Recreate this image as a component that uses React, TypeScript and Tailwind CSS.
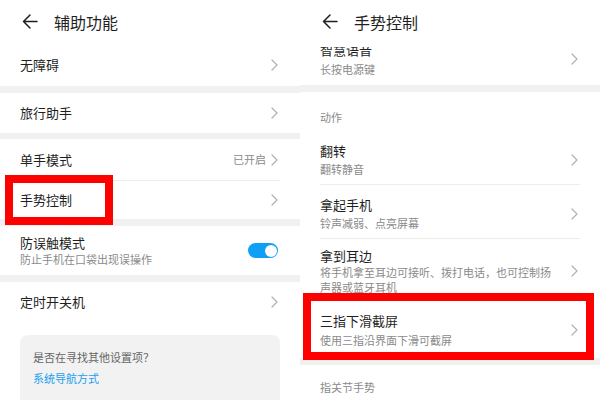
import React from "react";

const Chevron = () => (
  <svg width="7" height="12" viewBox="0 0 7 12" fill="none" className="shrink-0">
    <path d="M1 1L6 6L1 11" stroke="#b0b0b0" strokeWidth="1.2" strokeLinecap="round" strokeLinejoin="round" />
  </svg>
);

const Back = () => (
  <svg width="16" height="15" viewBox="0 0 16 15" fill="none" className="shrink-0">
    <path d="M15 7.5H1.5M8 1L1.5 7.5L8 14" stroke="#1f1f1f" strokeWidth="1.5" strokeLinecap="round" strokeLinejoin="round" />
  </svg>
);

const Sep = ({ h }: { h: string }) => <div className={`${h} bg-[#f1f1f1]`} />;

const Divider = () => <div className="mx-[20px] h-px bg-[#ececec]" />;

export default function App() {
  return (
    <div className="flex w-[600px] h-[400px] overflow-hidden bg-white font-['Noto_Sans_CJK_SC',sans-serif] text-[#1f1f1f]">
      {/* Left panel */}
      <div className="relative w-[300px] h-[400px] overflow-hidden bg-white">
        <div className="h-[43px] flex items-center pl-[22px]">
          <Back />
          <span className="ml-[16px] text-[16px] leading-[20px]">辅助功能</span>
        </div>
        <div className="h-[43px] flex items-center justify-between pl-[20px] pr-[22px]">
          <span className="text-[13px]">无障碍</span>
          <Chevron />
        </div>
        <Sep h="h-[7px]" />
        <div className="h-[40px] flex items-center justify-between pl-[20px] pr-[22px]">
          <span className="text-[13px]">旅行助手</span>
          <Chevron />
        </div>
        <Sep h="h-[6px]" />
        <div className="h-[41px] flex items-center justify-between pl-[20px] pr-[22px]">
          <span className="text-[13px]">单手模式</span>
          <div className="flex items-center gap-[5px]">
            <span className="text-[11px] text-[#8a8a8a]">已开启</span>
            <Chevron />
          </div>
        </div>
        <Divider />
        <div className="h-[38px] flex items-center justify-between pl-[20px] pr-[22px]">
          <span className="text-[13px]">手势控制</span>
          <Chevron />
        </div>
        <Sep h="h-[7px]" />
        <div className="h-[49px] flex items-center justify-between pl-[20px] pr-[22px]">
          <div className="flex flex-col">
            <span className="text-[13px] leading-[16px]">防误触模式</span>
            <span className="text-[11px] leading-[16px] text-[#8a8a8a]">防止手机在口袋出现误操作</span>
          </div>
          <div className="w-[30px] h-[15px] rounded-full bg-[#0fa0f5] flex items-center justify-end pr-[1.5px]">
            <div className="w-[12px] h-[12px] rounded-full bg-white" />
          </div>
        </div>
        <Sep h="h-[7px]" />
        <div className="h-[40px] flex items-center justify-between pl-[20px] pr-[22px]">
          <span className="text-[13px]">定时开关机</span>
          <Chevron />
        </div>
        <div className="pt-[13px] px-[20px]">
          <div className="h-[72px] rounded-[8px] bg-[#f2f2f2] pt-[13px] pl-[13px]">
            <div className="text-[11px] leading-[18px] text-[#666666]">是否在寻找其他设置项？</div>
            <div className="mt-[3px] text-[11px] leading-[18px] text-[#1a9ff0]">系统导航方式</div>
          </div>
        </div>
        <div className="absolute left-[5px] top-[175px] w-[108px] h-[50px] border-[8px] border-[#ff0000]" />
      </div>

      {/* Right panel */}
      <div className="relative w-[300px] h-[400px] overflow-hidden bg-white">
        <div className="relative z-10 bg-white h-[47px] flex items-center pl-[22px] pb-[4px]">
          <Back />
          <span className="ml-[16px] text-[16px] leading-[20px]">手势控制</span>
        </div>
        <div className="-mt-[18px] flex items-center justify-between pl-[20px] pr-[22px] pt-[12px] pb-[8px]">
          <div className="flex flex-col">
            <span className="text-[13px] leading-[18px]">智慧语音</span>
            <span className="mt-[2px] text-[11px] leading-[16px] text-[#8a8a8a]">长按电源键</span>
          </div>
          <Chevron />
        </div>
        <Sep h="h-[7px]" />
        <div className="pl-[20px] pt-[17px] pb-[6px] text-[11px] leading-[16px] text-[#8a8a8a]">动作</div>
        <div className="flex items-center justify-between pl-[20px] pr-[22px] pt-[11px] pb-[7px]">
          <div className="flex flex-col">
            <span className="text-[13px] leading-[18px]">翻转</span>
            <span className="mt-px text-[11px] leading-[16px] text-[#8a8a8a]">翻转静音</span>
          </div>
          <Chevron />
        </div>
        <Divider />
        <div className="flex items-center justify-between pl-[20px] pr-[22px] pt-[11px] pb-[7px]">
          <div className="flex flex-col">
            <span className="text-[13px] leading-[18px]">拿起手机</span>
            <span className="mt-px text-[11px] leading-[16px] text-[#8a8a8a]">铃声减弱、点亮屏幕</span>
          </div>
          <Chevron />
        </div>
        <Divider />
        <div className="flex items-center justify-between pl-[20px] pr-[22px] pt-[8px] pb-[3px]">
          <div className="flex flex-col">
            <span className="text-[13px] leading-[18px]">拿到耳边</span>
            <span className="w-[236px] text-[11px] leading-[15px] text-[#8a8a8a]">将手机拿至耳边可接听、拨打电话，也可控制扬声器或蓝牙耳机</span>
          </div>
          <Chevron />
        </div>
        <Divider />
        <div className="flex items-center justify-between pl-[20px] pr-[22px] pt-[13px] pb-[10px]">
          <div className="flex flex-col">
            <span className="text-[13px] leading-[18px]">三指下滑截屏</span>
            <span className="mt-[2px] text-[11px] leading-[16px] text-[#8a8a8a]">使用三指沿界面下滑可截屏</span>
          </div>
          <Chevron />
        </div>
        <Sep h="h-[7px]" />
        <div className="pl-[20px] pt-[14px] text-[11px] leading-[16px] text-[#8a8a8a]">指关节手势</div>
        <div className="absolute left-[3px] top-[293px] w-[291px] h-[67px] border-[8px] border-[#ff0000]" />
      </div>
    </div>
  );
}
